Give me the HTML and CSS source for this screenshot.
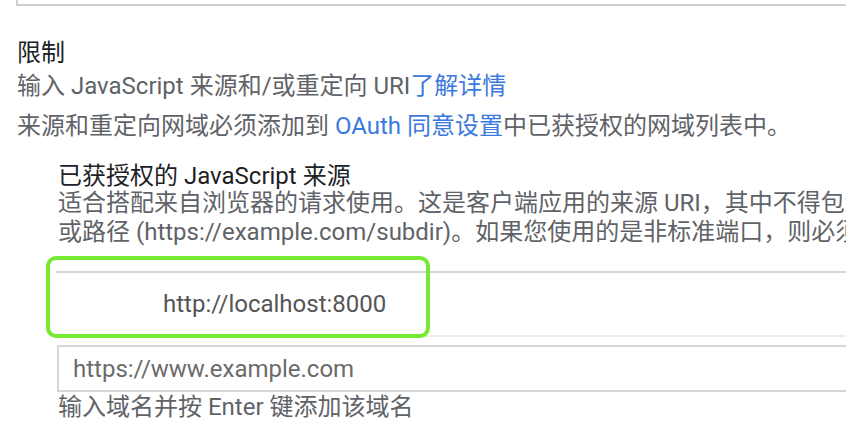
FILE: index.html
```html
<!DOCTYPE html>
<html lang="zh-CN">
<head>
    <meta charset="UTF-8">
    <meta name="viewport" content="width=device-width, initial-scale=1.0">
    <title>限制</title>
    <link rel="stylesheet" href="styles.css">
</head>
<body>
    <div class="top-card"></div>

    <div class="restrictions">
        <h2 class="title">限制</h2>
        <p class="intro">输入 JavaScript 来源和/或重定向 URI<a href="#">了解详情</a></p>
        <p class="intro intro-second">来源和重定向网域必须添加到 <a href="#">OAuth 同意设置</a>中已获授权的网域列表中。</p>

        <div class="origins">
            <h3 class="sub-title">已获授权的 JavaScript 来源</h3>
            <p class="hint">适合搭配来自浏览器的请求使用。这是客户端应用的来源 URI，其中不得包含通配符 (https://*.example.com)</p>
            <p class="hint">或路径 (https://example.com/subdir)。如果您使用的是非标准端口，则必须在来源 URI 中包含该端口。</p>

            <div class="origin-list">
                <div class="origin-row">http://localhost:8000</div>
                <!-- 截图上的高亮框 -->
                <div class="highlight"></div>
            </div>

            <input type="text" class="origin-input" placeholder="https://www.example.com">
            <p class="helper">输入域名并按 Enter 键添加该域名</p>
        </div>
    </div>
</body>
</html>
```

FILE: styles.css
```css
html {
    overflow: hidden;
}

body {
    margin: 0;
    width: 1100px;
    font-family: Roboto, "Noto Sans CJK SC", sans-serif;
    font-size: 24px;
    color: #5f6368;
    background-color: #fff;
}

a {
    color: #3b78e0;
    text-decoration: none;
}

.top-card {
    height: 4px;
    margin-left: 16px;
    border: 2px solid #d0d0d0;
    border-top: none;
}

.restrictions {
    padding-left: 17px;
}

.title {
    margin: 32px 0 0;
    font-size: 24px;
    font-weight: normal;
    line-height: 30px;
    color: #202124;
}

.intro {
    margin: 3px 0 0;
    line-height: 30px;
}

.intro-second {
    margin-top: 10px;
}

.origins {
    padding-left: 41px;
}

.sub-title {
    margin: 22px 0 0;
    font-size: 24px;
    font-weight: normal;
    line-height: 26px;
    color: #202124;
}

.hint {
    margin: 0;
    line-height: 29px;
    white-space: nowrap;
}

.origin-list {
    position: relative;
    margin-top: 24px;
    margin-left: -2px;
}

.origin-row {
    height: 62px;
    padding-left: 107px;
    line-height: 62px;
    color: #555;
    border-top: 2px solid #d6d6d6;
    border-bottom: 2px solid #ececec;
}

.highlight {
    position: absolute;
    left: -10px;
    top: -15px;
    width: 376px;
    height: 74px;
    border: 4px solid #76e933;
    border-radius: 10px;
}

.origin-input {
    display: block;
    box-sizing: border-box;
    width: 900px;
    height: 47px;
    margin: 8px 0 0 -1px;
    padding: 0 14px;
    font-family: inherit;
    font-size: 24px;
    color: #333;
    border: 2px solid #d6d6d6;
    border-right: none;
    outline: none;
}

.origin-input::placeholder {
    color: #6b6b6b;
}

.helper {
    margin: 2px 0 0;
    line-height: 26px;
}
```
